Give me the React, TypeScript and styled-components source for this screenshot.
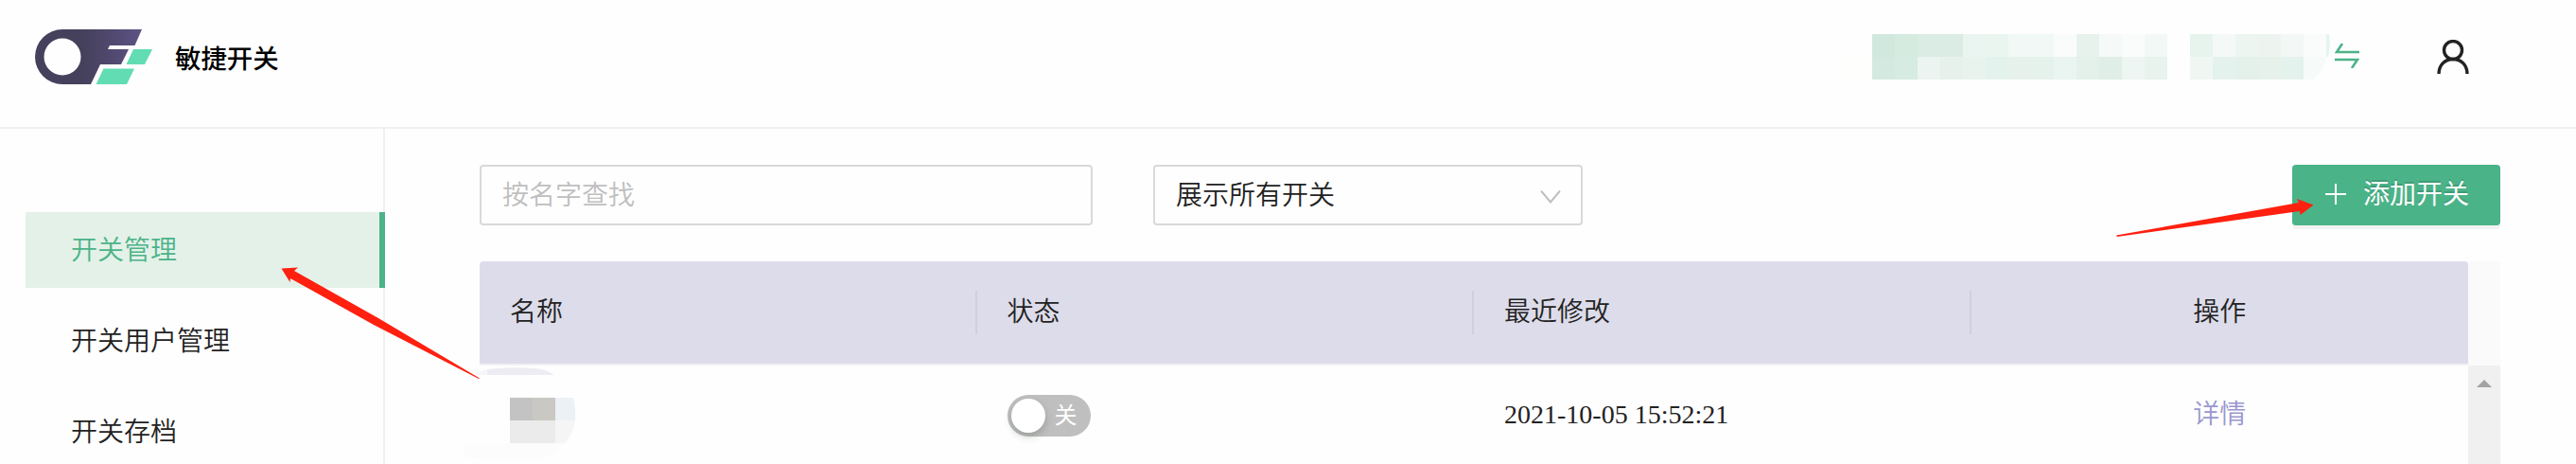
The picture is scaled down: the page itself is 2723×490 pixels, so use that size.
import React from "react";
import styled, { createGlobalStyle, css } from "styled-components";

const Global = createGlobalStyle`
  *, *::before, *::after { box-sizing: border-box; }
  body {
    margin: 0;
    background: #fefefe;
    color: #222;
    font-family: "Liberation Serif", "Noto Sans CJK SC", sans-serif;
    font-size: 28px;
    font-weight: 350;
    line-height: 44px;
  }
`;

const Page = styled.div`
  position: relative;
  width: 2723px;
  height: 490px;
  overflow: hidden;
  display: flex;
  flex-direction: column;
`;

const Header = styled.header`
  height: 136px;
  flex: none;
  padding: 31px 113px 0 37px;
  border-bottom: 2px solid #f0f0f0;
  display: flex;
  align-items: flex-start;
`;

const Logo = styled.svg`
  width: 124px;
  height: 58px;
  flex: none;
`;

const Brand = styled.h1`
  margin: 10px 0 0 24px;
  font-size: 27.4px;
  font-weight: 500;
  color: #000;
  flex: 1;
`;

const Project = styled.div`
  display: flex;
  align-items: center;
  margin: 5px -20px 0 0;
`;

const Mosaic = styled.div<{ $cols: number; $clip?: string }>`
  display: grid;
  grid-template-columns: repeat(${(p) => p.$cols}, 24px);
  grid-auto-rows: 24px;
  clip-path: ${(p) => p.$clip ?? "none"};
`;

const Tile = styled.i<{ $c: string }>`
  background: ${(p) => p.$c};
`;

const NameGap = styled.span`
  width: 24px;
`;

const SwapIcon = styled.svg`
  width: 26px;
  height: 26px;
  margin: 15px 0 0 5px;
`;

const UserIcon = styled.svg`
  width: 34px;
  height: 36px;
  margin: 11px 0 0 82px;
`;

const Body = styled.div`
  flex: 1;
  min-height: 0;
  display: flex;
`;

const Sidebar = styled.nav`
  width: 407px;
  flex: none;
  padding: 88px 0 0 27px;
  border-right: 2px solid #f0f0f0;
  display: flex;
  flex-direction: column;
  gap: 16px;
`;

const NavItem = styled.a<{ $active?: boolean }>`
  height: 80px;
  flex: none;
  padding: 19px 0 0 48px;
  ${(p) =>
    p.$active &&
    css`
      margin-right: -2px;
      color: #4bb388;
      background: #e4f1e8;
      border-right: 6px solid #4bb388;
    `}
`;

const Main = styled.main`
  width: 2136px;
  margin-left: 100px;
  padding-top: 38px;
`;

const Toolbar = styled.div`
  display: flex;
  height: 64px;
`;

const Field = styled.div<{ $width: number; $muted?: boolean }>`
  width: ${(p) => p.$width}px;
  margin-right: 64px;
  padding: 9px 21px 9px 22px;
  border: 2px solid #d9d9d9;
  border-radius: 4px;
  display: flex;
  justify-content: space-between;
  color: ${(p) => (p.$muted ? "#bfbfbf" : "#222")};
`;

const Chevron = styled.svg`
  width: 22px;
  height: 14px;
  margin-top: 16px;
`;

const AddButton = styled.button`
  width: 220px;
  margin-left: auto;
  padding: 0 0 0 35px;
  border: 0;
  border-radius: 4px;
  background: #4bb388;
  box-shadow: 0 4px 0 rgba(0, 0, 0, 0.045);
  color: #fff;
  font: inherit;
  font-weight: 400;
  text-shadow: 0 -2px 0 rgba(0, 0, 0, 0.12);
  display: flex;
  align-items: center;
  gap: 18px;
`;

const PlusIcon = styled.svg`
  width: 22px;
  height: 22px;
  margin-bottom: 2px;
`;

const TableBox = styled.div`
  margin-top: 38px;
  display: grid;
  grid-template-columns: 2102px 34px;
  grid-template-rows: 110px 104px;
`;

const Row = styled.div<{ $head?: boolean }>`
  display: grid;
  grid-template-columns: repeat(4, 1fr);
  align-items: center;
  ${(p) =>
    p.$head &&
    css`
      background: #dddcea;
      border-bottom: 2px solid #f0f0f0;
      border-radius: 4px 4px 0 0;
    `}
`;

const Cell = styled.div<{ $center?: boolean; $rule?: boolean; $color?: string }>`
  height: 46px;
  padding: 0 32px;
  line-height: 46px;
  text-align: ${(p) => (p.$center ? "center" : "left")};
  border-right: ${(p) => (p.$rule ? "2px solid #d0cfdd" : "0")};
  color: ${(p) => p.$color ?? "inherit"};
`;

const Corner = styled.div`
  background: #fafafa;
`;

const Scrollbar = styled.div`
  background: #f0f0f0;
  padding: 14px 0 0 9px;
  line-height: 0;
`;

const Switch = styled.div`
  width: 88px;
  height: 44px;
  margin-top: 2px;
  padding: 4px 14px 4px 4px;
  border-radius: 22px;
  background: #bfbfbf;
  color: #fff;
  font-size: 24px;
  font-weight: 400;
  line-height: 36px;
  display: flex;
  justify-content: space-between;
`;

const Knob = styled.span`
  width: 36px;
  height: 36px;
  border-radius: 50%;
  background: #fff;
  box-shadow: 0 4px 8px rgba(0, 35, 11, 0.2);
`;

const HiddenName = styled.svg`
  position: absolute;
  left: 490px;
  top: 386px;
  width: 120px;
  height: 104px;
`;

const Arrows = styled.svg`
  position: absolute;
  left: 0;
  top: 0;
  width: 2723px;
  height: 490px;
  pointer-events: none;
`;

const nameTiles = [
  "#fefefe", "#d0e8dd", "#d6ebdf", "#daece4", "#daece4", "#eaf4f0", "#ebf5f0", "#f1f8f6", "#f1f8f6", "#fafcfb", "#e8f2ec", "#f5f9f8", "#fafcfb", "#f2f8f6",
  "#fefefc", "#d4eae0", "#d6ebe1", "#ebf4f1", "#e7f1ec", "#e8f3ed", "#e4f2ee", "#e6f1eb", "#e5f2ec", "#eaf4f1", "#e3f1ea", "#dfeee6", "#edf6f2", "#e7f3ec",
];
const roleTiles = [
  "#e6f4ed", "#f4f8f7", "#ecf5f0", "#edf4ef", "#f3f7f6", "#fafcfc", "#e4f4ee",
  "#f0f7f3", "#e4f2ee", "#e4f1ea", "#e6f1eb", "#e4f2ee", "#f6fbfa", "#fefefe",
];

export default function App() {
  return (
    <>
      <Global />
      <Page>
        <Header>
          <Logo viewBox="0 0 124 58">
            <defs>
              <linearGradient id="logo" x1="0" x2="1">
                <stop offset="0.45" stopColor="#45405b" />
                <stop offset="1" stopColor="#5d5385" />
              </linearGradient>
            </defs>
            <path
              fill="url(#logo)"
              fillRule="evenodd"
              d="M29 0H113L105.500 17H79L77 21H99L91 37H69L59 58H29A29 29 0 0 1 29 0ZM29 9.500A19.500 19.500 0 1 0 29 48.500A19.500 19.500 0 1 0 29 9.500Z"
            />
            <path fill="#61dcb3" d="M104 21H124L116 37H96.500ZM72.500 41.500H105L97 58H64.500Z" />
          </Logo>
          <Brand>敏捷开关</Brand>
          <Project>
            <Mosaic $cols={14}>
              {nameTiles.map((c, i) => <Tile key={i} $c={c} />)}
            </Mosaic>
            <NameGap />
            <Mosaic $cols={7} $clip={'path("M0 0H147Q152 26 131 48H0Z")'}>
              {roleTiles.map((c, i) => <Tile key={i} $c={c} />)}
            </Mosaic>
          </Project>
          <SwapIcon viewBox="0 0 26 26" fill="none" stroke="#4bb388" strokeWidth="2.6">
            <path d="M26 9H2L8 0M0 17H24L18 26" />
          </SwapIcon>
          <UserIcon viewBox="0 0 34 36" fill="none" stroke="#222" strokeWidth="3.400">
            <circle cx="17" cy="11" r="9.500" />
            <path d="M2 36C2 27 8 20.500 17 20.500S32 27 32 36" />
          </UserIcon>
        </Header>
        <Body>
          <Sidebar>
            <NavItem $active>开关管理</NavItem>
            <NavItem>开关用户管理</NavItem>
            <NavItem>开关存档</NavItem>
          </Sidebar>
          <Main>
            <Toolbar>
              <Field $width={648} $muted>按名字查找</Field>
              <Field $width={454}>
                展示所有开关
                <Chevron viewBox="0 0 22 14" fill="none" stroke="#bfbfbf" strokeWidth="2">
                  <path d="M1 0.500L11 12.500L21 0.500" />
                </Chevron>
              </Field>
              <AddButton>
                <PlusIcon viewBox="0 0 22 22" stroke="#fff" strokeWidth="2">
                  <path d="M11 0V22M0 11H22" />
                </PlusIcon>
                添加开关
              </AddButton>
            </Toolbar>
            <TableBox>
              <Row $head>
                <Cell $rule>名称</Cell>
                <Cell $rule>状态</Cell>
                <Cell $rule>最近修改</Cell>
                <Cell $center>操作</Cell>
              </Row>
              <Corner />
              <Row>
                <Cell />
                <Cell>
                  <Switch><Knob />关</Switch>
                </Cell>
                <Cell>2021-10-05 15:52:21</Cell>
                <Cell $center $color="#9a96cf">详情</Cell>
              </Row>
              <Scrollbar>
                <svg width="16" height="8"><path fill="#a3a3a3" d="M8 0L16 8H0Z" /></svg>
              </Scrollbar>
            </TableBox>
          </Main>
        </Body>
        <HiddenName viewBox="0 0 120 104">
          <path fill="#ececf2" d="M25 4Q50 1 75 3Q88 4 96 10H25Z" />
          <path fill="#f6f6f9" d="M10 10Q16 5 25 4V10Z" />
          <path fill="#c3c3c3" d="M49 34H73V58H49Z" />
          <path fill="#c9c8c2" d="M73 34H97V58H73Z" />
          <path fill="#ecf1f5" d="M97 34H116Q119 46 118 58H97Z" />
          <path fill="#ebebeb" d="M49 58H97V82H49Z" />
          <path fill="#f5f5f5" d="M97 58H118Q116 72 107 82H97Z" />
          <path fill="#fcfcfc" d="M1 82H107Q95 96 75 100Q35 104 1 96Z" />
        </HiddenName>
        <Arrows viewBox="0 0 2723 490" fill="#ff2010">
          <path d="M297.500 283.500L315 282.500L311 286L400 336L507 399.500L506 400L395 343L307 294L306.500 298Z" />
          <path d="M2237 248.500L2430 214L2428 210L2445.500 216.500L2431.500 227L2431 223L2238 250Z" />
        </Arrows>
      </Page>
    </>
  );
}
